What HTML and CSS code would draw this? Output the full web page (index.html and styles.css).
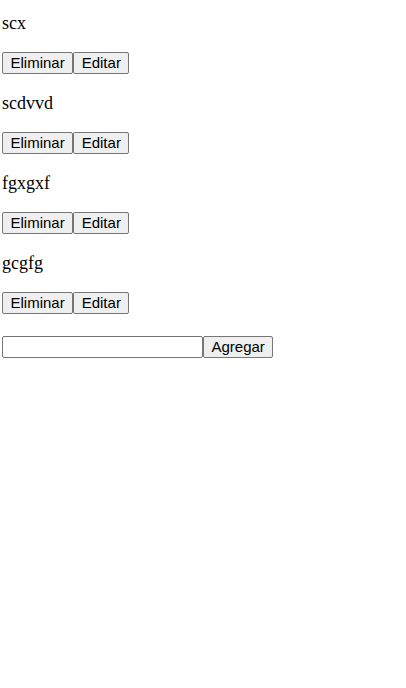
FILE: index.html
```html
<!DOCTYPE html>
<html lang="es">
<head>
<meta charset="utf-8">
<title>Lista</title>
<link rel="stylesheet" href="styles.css">
</head>
<body>
<main class="app">
  <ul class="list">
    <li class="item">
      <p class="name">scx</p>
      <div class="actions"><button class="btn">Eliminar</button><button class="btn">Editar</button></div>
    </li>
    <li class="item">
      <p class="name">scdvvd</p>
      <div class="actions"><button class="btn">Eliminar</button><button class="btn">Editar</button></div>
    </li>
    <li class="item">
      <p class="name">fgxgxf</p>
      <div class="actions"><button class="btn">Eliminar</button><button class="btn">Editar</button></div>
    </li>
    <li class="item">
      <p class="name">gcgfg</p>
      <div class="actions"><button class="btn">Eliminar</button><button class="btn">Editar</button></div>
    </li>
  </ul>
  <form class="add" onsubmit="return false"><input class="field" type="text"><button class="btn">Agregar</button></form>
</main>
</body>
</html>
```

FILE: styles.css
```css
html, body {
  margin: 0;
  padding: 0;
  background: #ffffff;
}

body {
  font-family: "Liberation Serif", "Times New Roman", serif;
  font-size: 18px;
  color: #000000;
}

.app {
  padding: 14px 2px 0;
}

.list {
  list-style: none;
  margin: 0;
  padding: 0;
  display: flex;
  flex-direction: column;
  gap: 20px;
}

.item {
  display: flex;
  flex-direction: column;
  gap: 20px;
}

.name {
  margin: 0;
  line-height: 18px;
  height: 18px;
}

.actions {
  display: flex;
  height: 22px;
  align-items: flex-start;
}

.btn {
  box-sizing: border-box;
  height: 22px;
  margin: 0;
  padding: 0 7.5px;
  font-family: "Liberation Sans", Arial, sans-serif;
  font-size: 15px;
  color: #000000;
  background: #efefef;
  border: 1px solid #767676;
  border-radius: 2px;
  line-height: 20px;
}

.add {
  display: flex;
  margin-top: 22px;
}

.field {
  box-sizing: border-box;
  width: 201px;
  height: 22px;
  margin: 0;
  padding: 1px 2px;
  border: 1px solid #767676;
  border-radius: 2px;
  font-family: "Liberation Sans", Arial, sans-serif;
  font-size: 15px;
  background: #ffffff;
}
```
